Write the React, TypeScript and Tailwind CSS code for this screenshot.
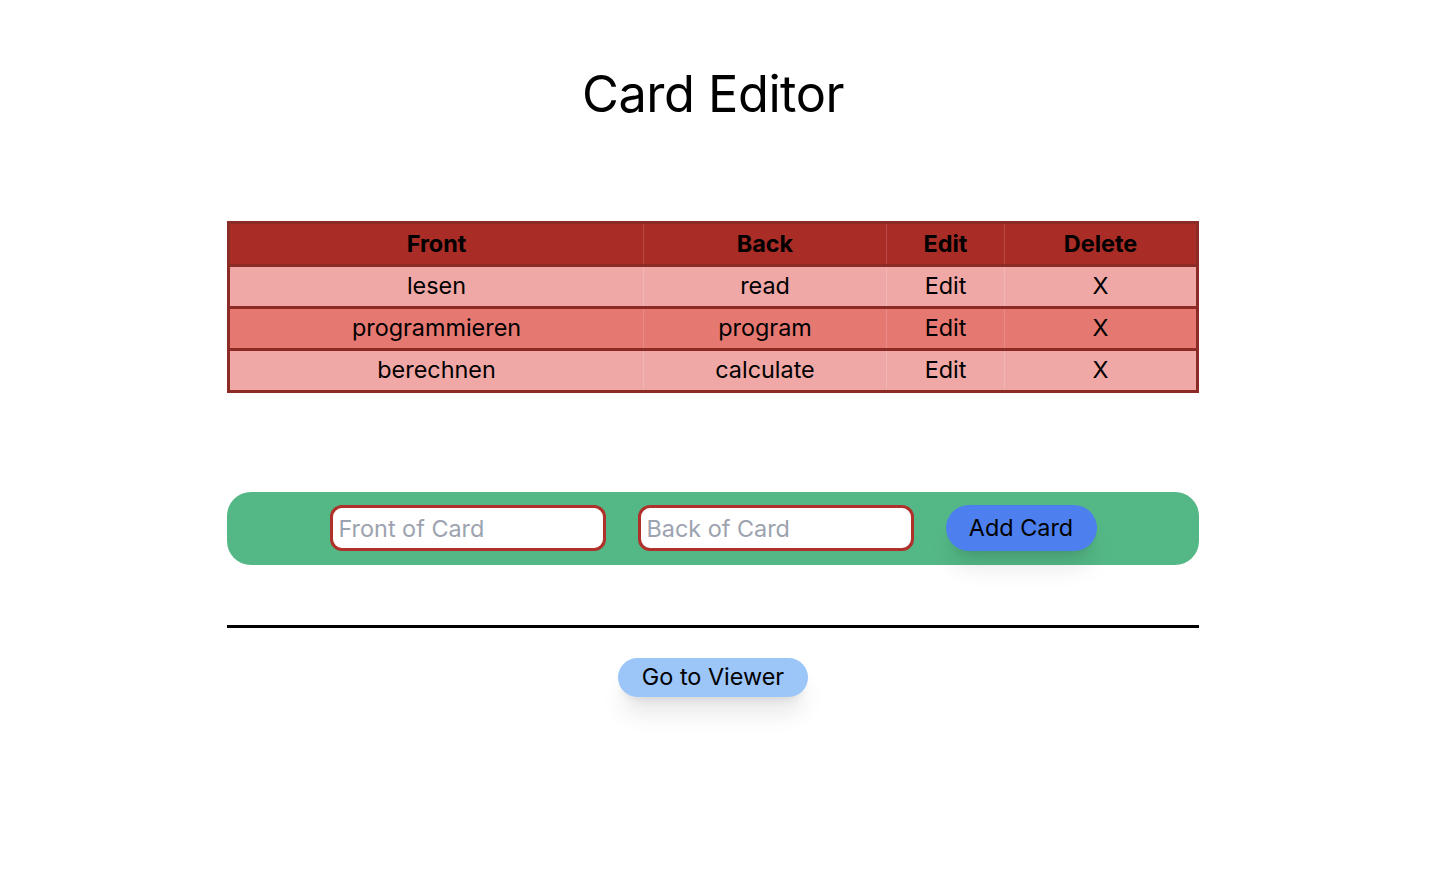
import React, { useState } from 'react';

type Card = { front: string; back: string };

const initialCards: Card[] = [
  { front: 'lesen', back: 'read' },
  { front: 'programmieren', back: 'program' },
  { front: 'berechnen', back: 'calculate' },
];

export default function App() {
  const [cards, setCards] = useState<Card[]>(initialCards);
  const [front, setFront] = useState('');
  const [back, setBack] = useState('');

  const addCard = () => {
    if (!front.trim() || !back.trim()) return;
    setCards([...cards, { front, back }]);
    setFront('');
    setBack('');
  };

  return (
    <div className="min-h-screen bg-white text-black font-['Inter',sans-serif]">
      <div className="w-[972px] ml-[227px] flex flex-col">
        {/* Title */}
        <h1 className="text-center text-[50.5px] leading-none tracking-[-0.5px] mt-[69px]">Card Editor</h1>

        {/* Cards table */}
        <table className="mt-[101px] w-full border-collapse border-[3px] border-[#8c2a26] text-[23.4px]">
          <thead>
            <tr className="bg-[#a92c26] h-[43px] border-b-[3px] border-[#8c2a26]">
              <th className="w-[415px] font-bold border-r border-white/15">Front</th>
              <th className="w-[243px] font-bold border-r border-white/15">Back</th>
              <th className="w-[118px] font-bold border-r border-white/15">Edit</th>
              <th className="font-bold">Delete</th>
            </tr>
          </thead>
          <tbody>
            {cards.map((c, i) => (
              <tr
                key={i}
                className={`h-[42px] border-b-[3px] border-[#8c2a26] ${i % 2 === 1 ? 'bg-[#e67872]' : 'bg-[#f0a8a6]'}`}
              >
                <td className="text-center border-r border-white/15">{c.front}</td>
                <td className="text-center border-r border-white/15">{c.back}</td>
                <td className="text-center border-r border-white/15">Edit</td>
                <td className="text-center">
                  <button onClick={() => setCards(cards.filter((_, j) => j !== i))}>X</button>
                </td>
              </tr>
            ))}
          </tbody>
        </table>

        {/* Add card form */}
        <div className="mt-[99px] h-[73px] rounded-[24px] bg-[#54b886] flex items-center justify-center gap-8">
          <input
            value={front}
            onChange={(e) => setFront(e.target.value)}
            placeholder="Front of Card"
            className="w-[276px] h-[46px] rounded-[12px] border-[3px] border-[#b0302a] bg-white px-[6px] text-[23.4px] placeholder:text-[#9ca3af] outline-none"
          />
          <input
            value={back}
            onChange={(e) => setBack(e.target.value)}
            placeholder="Back of Card"
            className="w-[276px] h-[46px] rounded-[12px] border-[3px] border-[#b0302a] bg-white px-[6px] text-[23.4px] placeholder:text-[#9ca3af] outline-none"
          />
          <button
            onClick={addCard}
            className="w-[151px] h-[46px] rounded-full bg-[#4d80ee] text-[23.4px] shadow-xl"
          >
            Add Card
          </button>
        </div>

        <hr className="mt-[60px] border-t-[3px] border-black" />

        <div className="flex justify-center mt-[30px]">
          <button className="h-[39px] px-[24px] rounded-full bg-[#9cc5f8] text-[23.4px] shadow-xl">
            Go to Viewer
          </button>
        </div>
      </div>
    </div>
  );
}
